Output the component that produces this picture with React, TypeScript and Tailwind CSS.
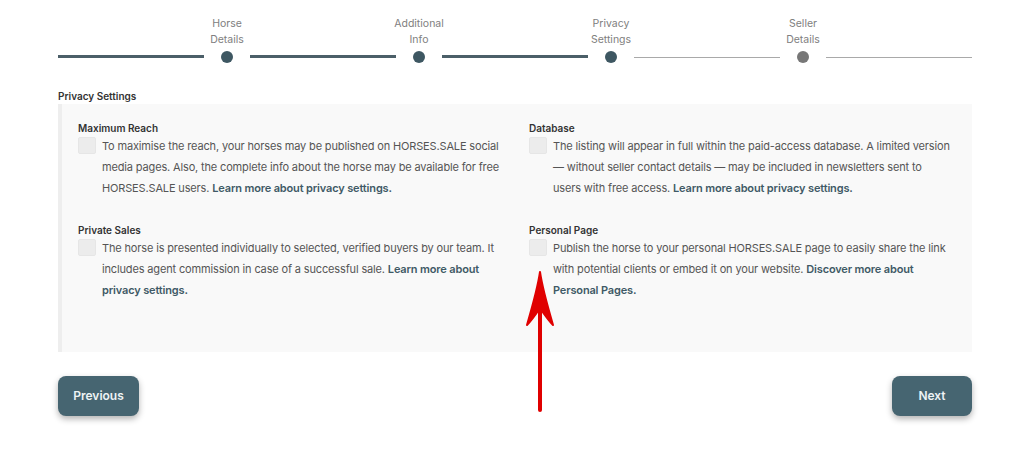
import React from "react";

const steps = [
  { l1: "Horse", l2: "Details", active: true },
  { l1: "Additional", l2: "Info", active: true },
  { l1: "Privacy", l2: "Settings", active: true },
  { l1: "Seller", l2: "Details", active: false },
];

function Option({
  title,
  children,
}: {
  title: string;
  children: React.ReactNode;
}) {
  return (
    <div>
      <div className="text-[10px] font-semibold leading-4 text-[#333]">{title}</div>
      <div className="flex items-start gap-[6px]">
        <div className="mt-[1px] h-[17px] w-[18px] shrink-0 rounded-[2px] border border-[#e6e6e6] bg-[#ececec]" />
        <p className="text-[11px] leading-[21px] tracking-[-0.15px] text-[#555]">{children}</p>
      </div>
    </div>
  );
}

function Link({ children }: { children: React.ReactNode }) {
  return <span className="font-semibold text-[#3f5a66]">{children}</span>;
}

export default function App() {
  return (
    <div
      className="relative h-[459px] w-[1024px] overflow-hidden bg-white"
      style={{ fontFamily: "Inter, 'Noto Sans', sans-serif" }}
    >
      <div className="pl-[58px] pr-[52px] pt-[16px]">
        {/* Stepper */}
        <div className="flex items-end">
          {steps.map((s, i) => (
            <React.Fragment key={i}>
              <div
                className={`mb-[5px] flex-1 ${
                  i <= 2 ? "h-[3px] bg-[#4b5f68]" : "h-px bg-[#a9a9a9]"
                }`}
              />
              <div className="mx-[17px] flex w-3 flex-col items-center">
                <div className="w-[80px] shrink-0 text-center text-[10.5px] leading-4 text-[#808080]">
                  <div>{s.l1}</div>
                  <div>{s.l2}</div>
                </div>
                <div
                  className={`mt-[3px] h-3 w-3 shrink-0 rounded-full ${
                    s.active ? "bg-[#3e5762]" : "bg-[#777]"
                  }`}
                />
              </div>
            </React.Fragment>
          ))}
          <div className="mb-[5px] h-px flex-1 bg-[#a9a9a9]" />
        </div>
        {/* Section title */}
        <div className="mt-[25px] text-[10px] font-semibold leading-4 text-[#333]">
          Privacy Settings
        </div>
        {/* Panel */}
        <div className="h-[248px] border-l-4 border-[#eeeeee] bg-[#f9f9f9] pl-4 pr-[14px] pt-[16px]">
          <div className="grid grid-cols-2 gap-x-[22px] gap-y-[23px]">
            <Option title="Maximum Reach">
              To maximise the reach, your horses may be published on HORSES.SALE social
              media pages. Also, the complete info about the horse may be available for free
              HORSES.SALE users. <Link>Learn more about privacy settings.</Link>
            </Option>
            <Option title="Database">
              The listing will appear in full within the paid-access database. A limited version
              — without seller contact details — may be included in newsletters sent to
              <br />
              users with free access. <Link>Learn more about privacy settings.</Link>
            </Option>
            <Option title="Private Sales">
              The horse is presented individually to selected, verified buyers by our team. It
              includes agent commission in case of a successful sale.{" "}
              <Link>Learn more about privacy settings.</Link>
            </Option>
            <Option title="Personal Page">
              Publish the horse to your personal HORSES.SALE page to easily share the link with
              potential clients or embed it on your website.{" "}
              <Link>Discover more about Personal Pages.</Link>
            </Option>
          </div>
        </div>
        {/* Buttons */}
        <div className="mt-6 flex justify-between">
          <button className="h-10 w-[81px] rounded-lg bg-[#466571] text-[12px] font-semibold text-[#eef3f5] shadow-[0_3px_6px_rgba(0,0,0,0.3)]">
            Previous
          </button>
          <button className="h-10 w-[80px] rounded-lg bg-[#466571] text-[12px] font-semibold text-[#eef3f5] shadow-[0_3px_6px_rgba(0,0,0,0.3)]">
            Next
          </button>
        </div>
      </div>
      {/* Red annotation arrow */}
      <svg
        className="absolute left-[524px] top-[268px]"
        width="32"
        height="146"
        viewBox="0 0 32 146"
      >
        <path d="M16 20 L16 142" stroke="#e00000" strokeWidth="4" strokeLinecap="round" />
        <path
          d="M16 4 C14 18 8 40 3 57 C8 52 12 46 16 40 C20 46 24 52 29 57 C24 40 18 18 16 4 Z"
          fill="#e00000"
          stroke="#e00000"
          strokeWidth="2"
          strokeLinejoin="round"
        />
      </svg>
    </div>
  );
}
